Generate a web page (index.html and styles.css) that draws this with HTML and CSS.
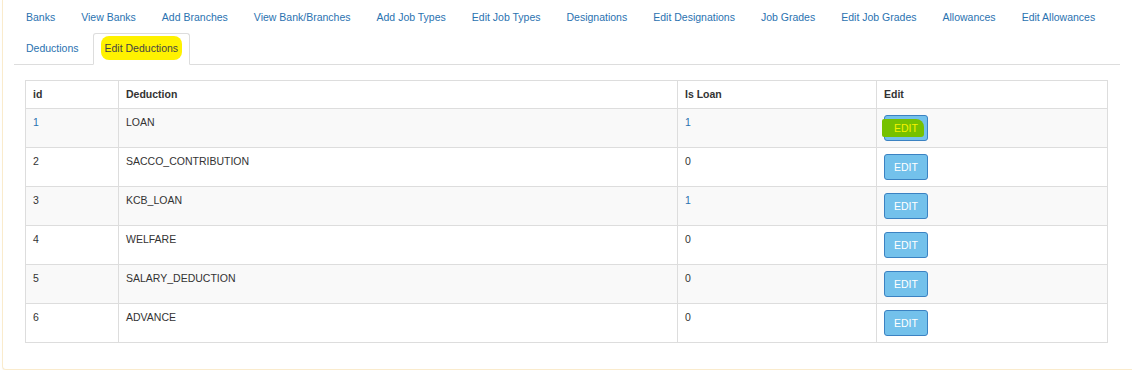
FILE: index.html
```html
<!DOCTYPE html>
<html lang="en">
<head>
    <meta charset="UTF-8">
    <title>Edit Deductions</title>
    <link rel="stylesheet" href="styles.css">
</head>
<body>
    <div class="panel">
        <ul class="tabs">
            <li><a href="#">Banks</a></li>
            <li><a href="#">View Banks</a></li>
            <li><a href="#">Add Branches</a></li>
            <li><a href="#">View Bank/Branches</a></li>
            <li><a href="#">Add Job Types</a></li>
            <li><a href="#">Edit Job Types</a></li>
            <li><a href="#">Designations</a></li>
            <li><a href="#">Edit Designations</a></li>
            <li><a href="#">Job Grades</a></li>
            <li><a href="#">Edit Job Grades</a></li>
            <li><a href="#">Allowances</a></li>
            <li><a href="#">Edit Allowances</a></li>
            <li><a href="#">Deductions</a></li>
            <li class="active"><a href="#"><span class="marker">Edit Deductions</span></a></li>
        </ul>

        <div class="tab-content">
            <table class="grid">
                <thead>
                    <tr>
                        <th class="c-id">id</th>
                        <th class="c-name">Deduction</th>
                        <th class="c-loan">Is Loan</th>
                        <th>Edit</th>
                    </tr>
                </thead>
                <tbody>
                    <tr>
                        <td><a href="#">1</a></td>
                        <td>LOAN</td>
                        <td><a href="#">1</a></td>
                        <td><button class="btn-edit"><span class="marker-green">EDIT</span></button></td>
                    </tr>
                    <tr>
                        <td>2</td>
                        <td>SACCO_CONTRIBUTION</td>
                        <td>0</td>
                        <td><button class="btn-edit">EDIT</button></td>
                    </tr>
                    <tr>
                        <td>3</td>
                        <td>KCB_LOAN</td>
                        <td><a href="#">1</a></td>
                        <td><button class="btn-edit">EDIT</button></td>
                    </tr>
                    <tr>
                        <td>4</td>
                        <td>WELFARE</td>
                        <td>0</td>
                        <td><button class="btn-edit">EDIT</button></td>
                    </tr>
                    <tr>
                        <td>5</td>
                        <td>SALARY_DEDUCTION</td>
                        <td>0</td>
                        <td><button class="btn-edit">EDIT</button></td>
                    </tr>
                    <tr>
                        <td>6</td>
                        <td>ADVANCE</td>
                        <td>0</td>
                        <td><button class="btn-edit">EDIT</button></td>
                    </tr>
                </tbody>
            </table>
        </div>
    </div>
</body>
</html>
```

FILE: styles.css
```css
* {
    margin: 0;
    padding: 0;
    box-sizing: border-box;
}

html, body {
    overflow: hidden;
}

body {
    font-family: 'Liberation Sans', Arial, sans-serif;
    font-size: 10.5px;
    color: #333;
    background: #fff;
}

a {
    color: #2a72b0;
    text-decoration: none;
}

.panel {
    margin-left: 2px;
    margin-right: -20px;
    padding: 2px 31px 26px 11px;
    border: 1px solid #faebcc;
    border-top: none;
    border-radius: 0 0 4px 4px;
    box-shadow: 0 1px 1px rgba(0, 0, 0, 0.05);
}

.tabs {
    list-style: none;
    display: flex;
    flex-wrap: wrap;
    border-bottom: 1px solid #ddd;
}

.tabs li {
    margin-right: 2px;
    margin-bottom: -1px;
}

.tabs a {
    display: block;
    padding: 7px 11px 8px;
    line-height: 15px;
    border: 1px solid transparent;
    border-radius: 3px 3px 0 0;
}

.tabs .active a {
    color: #444;
    background: #fff;
    border-color: #ddd #ddd transparent;
}

.marker {
    background: #fff200;
    border-radius: 8px;
    padding: 6px 4px;
    margin: 0 -4px;
}

.tab-content {
    padding: 15px 12px 0 11px;
}

.grid {
    width: 100%;
    border-collapse: collapse;
    border: 1px solid #ddd;
}

.grid th,
.grid td {
    border: 1px solid #ddd;
    padding: 6px 7px;
    line-height: 15px;
    text-align: left;
    vertical-align: top;
}

.grid th {
    font-weight: bold;
}

.grid td {
    height: 39px;
}

.grid tbody tr:nth-child(odd) {
    background: #f9f9f9;
}

.c-id {
    width: 93px;
}

.c-name {
    width: 559px;
}

.c-loan {
    width: 199px;
}

.btn-edit {
    width: 44px;
    height: 26px;
    background: #73c1eb;
    border: 1px solid #3b82c2;
    border-radius: 3px;
    color: #fff;
    font-family: inherit;
    font-size: 10.5px;
}

.marker-green {
    background: #76c100;
    color: #f7f200;
    padding: 3px 6px 3px 12px;
    margin-left: -6px;
    border-radius: 2px 8px 3px 2px;
}
```
